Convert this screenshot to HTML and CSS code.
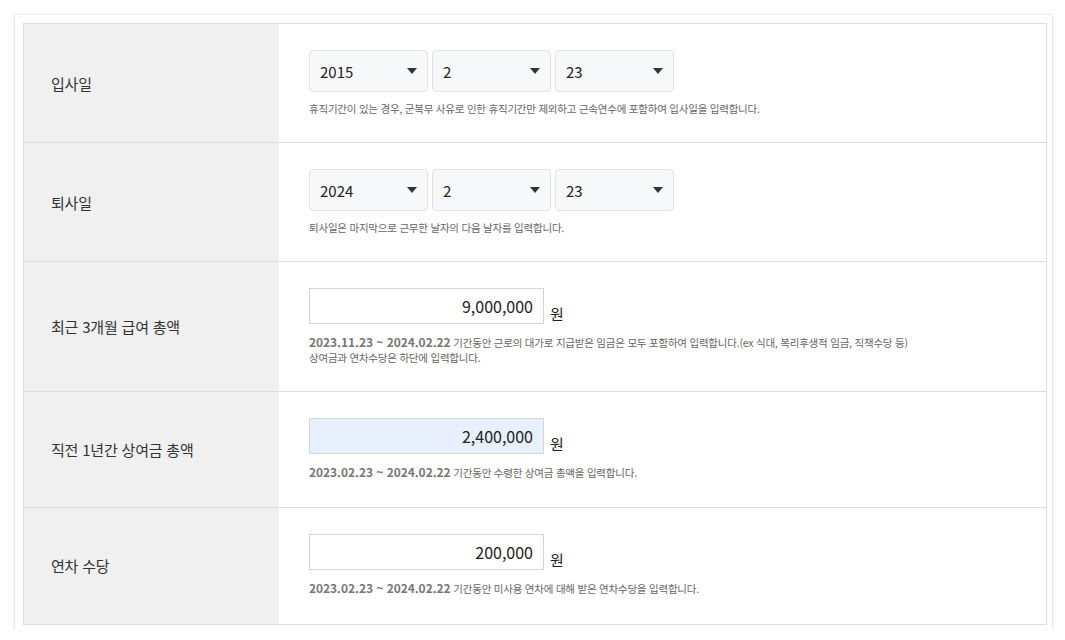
FILE: index.html
```html
<!DOCTYPE html>
<html lang="ko">
<head>
    <meta charset="UTF-8">
    <title>퇴직금 계산</title>
    <link rel="stylesheet" href="styles.css">
</head>
<body>
    <div class="card">
        <div class="form-table">
            <div class="row">
                <div class="label">입사일</div>
                <div class="field">
                    <div class="selects">
                        <div class="select"><span>2015</span><svg width="10" height="6" viewBox="0 0 10 6"><path d="M0 0h10L5 6z" fill="#333"/></svg></div>
                        <div class="select"><span>2</span><svg width="10" height="6" viewBox="0 0 10 6"><path d="M0 0h10L5 6z" fill="#333"/></svg></div>
                        <div class="select"><span>23</span><svg width="10" height="6" viewBox="0 0 10 6"><path d="M0 0h10L5 6z" fill="#333"/></svg></div>
                    </div>
                    <p class="help help-select">휴직기간이 있는 경우, 군복무 사유로 인한 휴직기간만 제외하고 근속연수에 포함하여 입사일을 입력합니다.</p>
                </div>
            </div>
            <div class="row">
                <div class="label">퇴사일</div>
                <div class="field">
                    <div class="selects">
                        <div class="select"><span>2024</span><svg width="10" height="6" viewBox="0 0 10 6"><path d="M0 0h10L5 6z" fill="#333"/></svg></div>
                        <div class="select"><span>2</span><svg width="10" height="6" viewBox="0 0 10 6"><path d="M0 0h10L5 6z" fill="#333"/></svg></div>
                        <div class="select"><span>23</span><svg width="10" height="6" viewBox="0 0 10 6"><path d="M0 0h10L5 6z" fill="#333"/></svg></div>
                    </div>
                    <p class="help help-select">퇴사일은 마지막으로 근무한 날자의 다음 날자를 입력합니다.</p>
                </div>
            </div>
            <div class="row">
                <div class="label">최근 3개월 급여 총액</div>
                <div class="field">
                    <div class="amount">
                        <input class="money" type="text" value="9,000,000">
                        <span class="unit">원</span>
                    </div>
                    <p class="help"><b>2023.11.23 ~ 2024.02.22</b> 기간동안 근로의 대가로 지급받은 임금은 모두 포함하여 입력합니다.(ex 식대, 복리후생적 임금, 직책수당 등)<br>상여금과 연차수당은 하단에 입력합니다.</p>
                </div>
            </div>
            <div class="row">
                <div class="label">직전 1년간 상여금 총액</div>
                <div class="field">
                    <div class="amount">
                        <input class="money filled" type="text" value="2,400,000">
                        <span class="unit">원</span>
                    </div>
                    <p class="help"><b>2023.02.23 ~ 2024.02.22</b> 기간동안 수령한 상여금 총액을 입력합니다.</p>
                </div>
            </div>
            <div class="row">
                <div class="label">연차 수당</div>
                <div class="field">
                    <div class="amount">
                        <input class="money" type="text" value="200,000">
                        <span class="unit">원</span>
                    </div>
                    <p class="help"><b>2023.02.23 ~ 2024.02.22</b> 기간동안 미사용 연차에 대해 받은 연차수당을 입력합니다.</p>
                </div>
            </div>
        </div>
    </div>
</body>
</html>
```

FILE: styles.css
```css
body {
    margin: 0;
    background-color: #fff;
    font-family: "Noto Sans CJK KR", "Noto Sans", sans-serif;
    color: #333;
}
.card {
    width: 1024px;
    margin: 15px 0 0 15px;
    padding: 8px 5px 5px 8px;
    background-color: #fff;
    box-shadow: 0 1px 4px rgba(0, 0, 0, 0.12), 0 0 0 1px #f2f2f2;
}
.form-table {
    border: 1px solid #ddd;
}
.row {
    display: grid;
    grid-template-columns: 255px 1fr;
    border-bottom: 1px solid #ddd;
}
.row:last-child {
    border-bottom: none;
}
.label {
    display: flex;
    align-items: center;
    padding-left: 27px;
    background-color: #f0f0f0;
    font-size: 15px;
    letter-spacing: -0.2px;
    color: #333;
}
.field {
    padding: 26px 30px 26px;
}
.row:last-child .field {
    padding-bottom: 28px;
}
.selects {
    display: flex;
    gap: 4px;
}
.select {
    display: flex;
    justify-content: space-between;
    align-items: center;
    box-sizing: border-box;
    width: 119px;
    height: 42px;
    padding: 0 10px 0 10px;
    border: 1px solid #e2e2e2;
    border-radius: 4px;
    background-color: #f7f8fa;
    font-size: 15px;
    color: #222;
}
.help {
    margin: 11px 0 0;
    font-size: 10.5px;
    line-height: 14.5px;
    letter-spacing: -0.22px;
    color: #666;
}
.help-select {
    margin-top: 10px;
    line-height: 14px;
}
.help b {
    font-size: 12px;
    letter-spacing: -0.05px;
    color: #777;
}
.amount {
    display: flex;
    align-items: flex-end;
}
.money {
    box-sizing: border-box;
    width: 235px;
    height: 36px;
    margin: 0;
    padding: 0 10px;
    border: 1px solid #d4d4d4;
    background-color: #fff;
    font-family: "Noto Sans CJK KR", "Noto Sans", sans-serif;
    font-size: 16px;
    color: #222;
    text-align: right;
    outline: none;
}
.money.filled {
    background-color: #e8f0fe;
}
.unit {
    margin-left: 6px;
    font-size: 15px;
    line-height: 20px;
    color: #222;
}
```
